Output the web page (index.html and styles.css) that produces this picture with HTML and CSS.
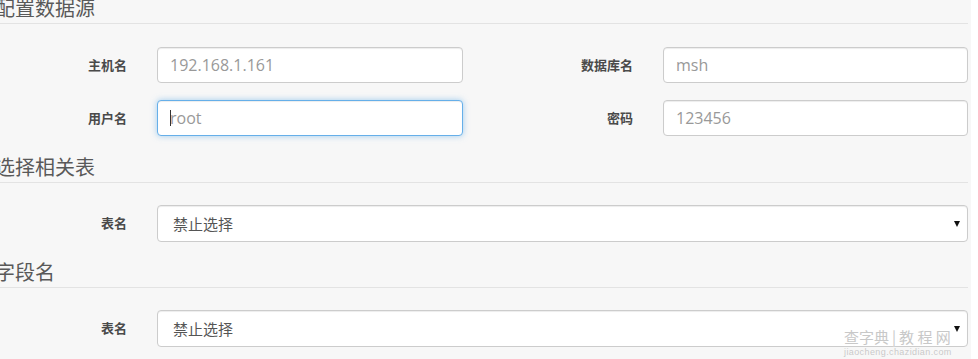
FILE: index.html
```html
<!DOCTYPE html>
<html lang="zh-CN">
<head>
    <meta charset="UTF-8">
    <meta name="viewport" content="width=device-width, initial-scale=1.0">
    <title>配置数据源</title>
    <link rel="stylesheet" href="styles.css">
</head>
<body>
    <div class="page">
        <div class="section">
            <h3 class="legend">配置数据源</h3>
            <div class="form-grid two-col">
                <label class="field-label">主机名</label>
                <input class="form-control" type="text" placeholder="192.168.1.161">
                <label class="field-label">数据库名</label>
                <input class="form-control" type="text" placeholder="msh">

                <label class="field-label">用户名</label>
                <div class="input-wrap">
                    <input class="form-control focused" type="text" placeholder="root">
                    <span class="caret"></span>
                </div>
                <label class="field-label">密码</label>
                <input class="form-control" type="text" placeholder="123456">
            </div>
        </div>

        <div class="section">
            <h3 class="legend">选择相关表</h3>
            <div class="form-grid one-col">
                <label class="field-label">表名</label>
                <div class="select-wrap">
                    <select class="form-control select" disabled>
                        <option>禁止选择</option>
                    </select>
                    <span class="arrow"></span>
                </div>
            </div>
        </div>

        <div class="section">
            <h3 class="legend">字段名</h3>
            <div class="form-grid one-col">
                <label class="field-label">表名</label>
                <div class="select-wrap">
                    <select class="form-control select" disabled>
                        <option>禁止选择</option>
                    </select>
                    <span class="arrow"></span>
                </div>
            </div>
        </div>

        <!-- site watermark in the bottom right corner -->
        <div class="watermark">
            <div class="wm-title">查字典<span class="wm-bar">|</span>教 程 网</div>
            <div class="wm-url">jiaocheng.chazidian.com</div>
        </div>
    </div>
</body>
</html>
```

FILE: styles.css
```css
body {
    margin: 0;
    padding: 0;
    background: #ffffff;
    font-family: "Open Sans", "Noto Sans CJK SC", sans-serif;
}

.page {
    position: relative;
    width: 971px;
    height: 359px;
    overflow: hidden;
    background: #f7f7f7;
}

.section {
    width: 968px;
}

.legend {
    margin: 0 0 23px -5px;
    padding: 0 0 7px 0;
    font-size: 20px;
    line-height: 16px;
    font-weight: normal;
    color: #595959;
    font-family: "Noto Sans CJK SC", sans-serif;
    border-bottom: 1px solid #e3e3e3;
}

.section + .section .legend {
    margin-bottom: 22px;
}

.section + .section {
    margin-top: 23px;
}

.section:nth-child(3) {
    margin-top: 22px;
}

.form-grid {
    display: grid;
    column-gap: 30px;
    row-gap: 17px;
    align-items: center;
}

.two-col {
    grid-template-columns: 127px 306px 140px 305px;
}

.one-col {
    grid-template-columns: 127px 811px;
}

.field-label {
    text-align: right;
    font-family: "Noto Sans CJK SC", sans-serif;
    font-size: 13px;
    font-weight: bold;
    color: #4a4a4a;
    margin-top: -2px;
}

.form-control {
    display: block;
    width: 100%;
    height: 36px;
    box-sizing: border-box;
    padding: 0 12px;
    font-family: "Open Sans", "Noto Sans CJK SC", sans-serif;
    font-size: 16px;
    color: #555;
    background: #fff;
    border: 1px solid #ccc;
    border-radius: 4px;
    box-shadow: inset 0 1px 1px rgba(0, 0, 0, .075);
    outline: none;
}

.form-control::placeholder {
    color: #999;
}

.focused {
    border-color: #66afe9;
    box-shadow: inset 0 1px 1px rgba(0, 0, 0, .075), 0 0 6px rgba(102, 175, 233, .6);
}

.input-wrap,
.select-wrap {
    position: relative;
}

.caret {
    position: absolute;
    left: 13px;
    top: 10px;
    width: 1px;
    height: 16px;
    background: #333;
}

.select {
    -webkit-appearance: none;
    appearance: none;
    height: 37px;
    padding-left: 15px;
    font-size: 15px;
    font-family: "Noto Sans CJK SC", sans-serif;
    color: #555;
    opacity: 1;
}

.arrow {
    position: absolute;
    right: 8px;
    top: 16px;
    width: 0;
    height: 0;
    border-left: 3px solid transparent;
    border-right: 3px solid transparent;
    border-top: 6px solid #111;
}

.watermark {
    position: absolute;
    left: 844px;
    top: 327px;
    width: 124px;
    white-space: nowrap;
    color: #c8c8c8;
    text-shadow: 0 0 1px #fff;
}

.wm-title {
    font-family: "Noto Sans CJK SC", sans-serif;
    font-size: 15px;
    line-height: 20px;
}

.wm-bar {
    margin: 0 3px;
}

.wm-url {
    font-family: "Liberation Sans", sans-serif;
    font-size: 9px;
    line-height: 10px;
    letter-spacing: 0.4px;
}
```
